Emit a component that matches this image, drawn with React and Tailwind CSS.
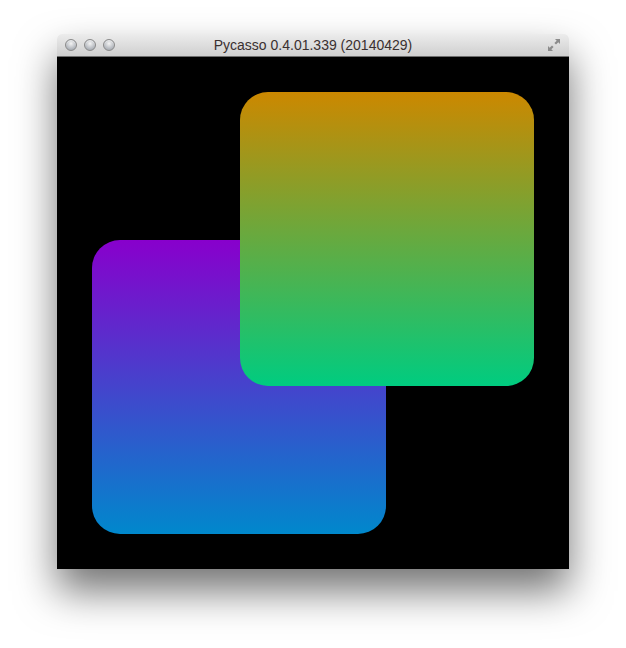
import React from "react";

function TrafficLight() {
  return (
    <span className="w-[12px] h-[12px] rounded-full border border-[#8a8a8a] bg-[radial-gradient(circle_at_50%_35%,#f4f4f4,#b8bcc2_60%,#9aa0a8)] shadow-[inset_0_1px_1px_rgba(255,255,255,0.6)]" />
  );
}

function FullscreenIcon() {
  return (
    <svg width="14" height="14" viewBox="0 0 14 14" className="text-[#8c8c8c]">
      <path d="M8 1 H13 V6 L11.3 4.3 L9 6.6 L7.4 5 L9.7 2.7 Z" fill="currentColor" />
      <path d="M6 13 H1 V8 L2.7 9.7 L5 7.4 L6.6 9 L4.3 11.3 Z" fill="currentColor" />
    </svg>
  );
}

export default function App() {
  return (
    <div className="w-[626px] h-[648px] bg-white pt-[34px] pl-[57px]">
      <div className="w-[512px] rounded-t-[5px] shadow-[0_22px_40px_rgba(0,0,0,0.55)]">
        <div className="h-[23px] rounded-t-[5px] border-b border-[#6e6e6e] bg-gradient-to-b from-[#ececec] to-[#cfcfcf] flex items-center px-[8px] relative">
          <div className="flex gap-[7px]">
            <TrafficLight />
            <TrafficLight />
            <TrafficLight />
          </div>
          <div className="flex-1 text-center text-[14px] text-[#3a3030] font-['Liberation_Sans',Arial,sans-serif] leading-none pr-[40px] pl-[4px]">
            Pycasso 0.4.01.339 (20140429)
          </div>
          <FullscreenIcon />
        </div>
        <div className="relative w-[512px] h-[512px] bg-black">
          <div className="absolute left-[35px] top-[183px] w-[294px] h-[294px] rounded-[28px] bg-[linear-gradient(to_bottom,#8800cc,#0088cc)]" />
          <div className="absolute left-[183px] top-[35px] w-[294px] h-[294px] rounded-[28px] bg-[linear-gradient(to_bottom,#cc8800,#00cc80)]" />
        </div>
      </div>
    </div>
  );
}
